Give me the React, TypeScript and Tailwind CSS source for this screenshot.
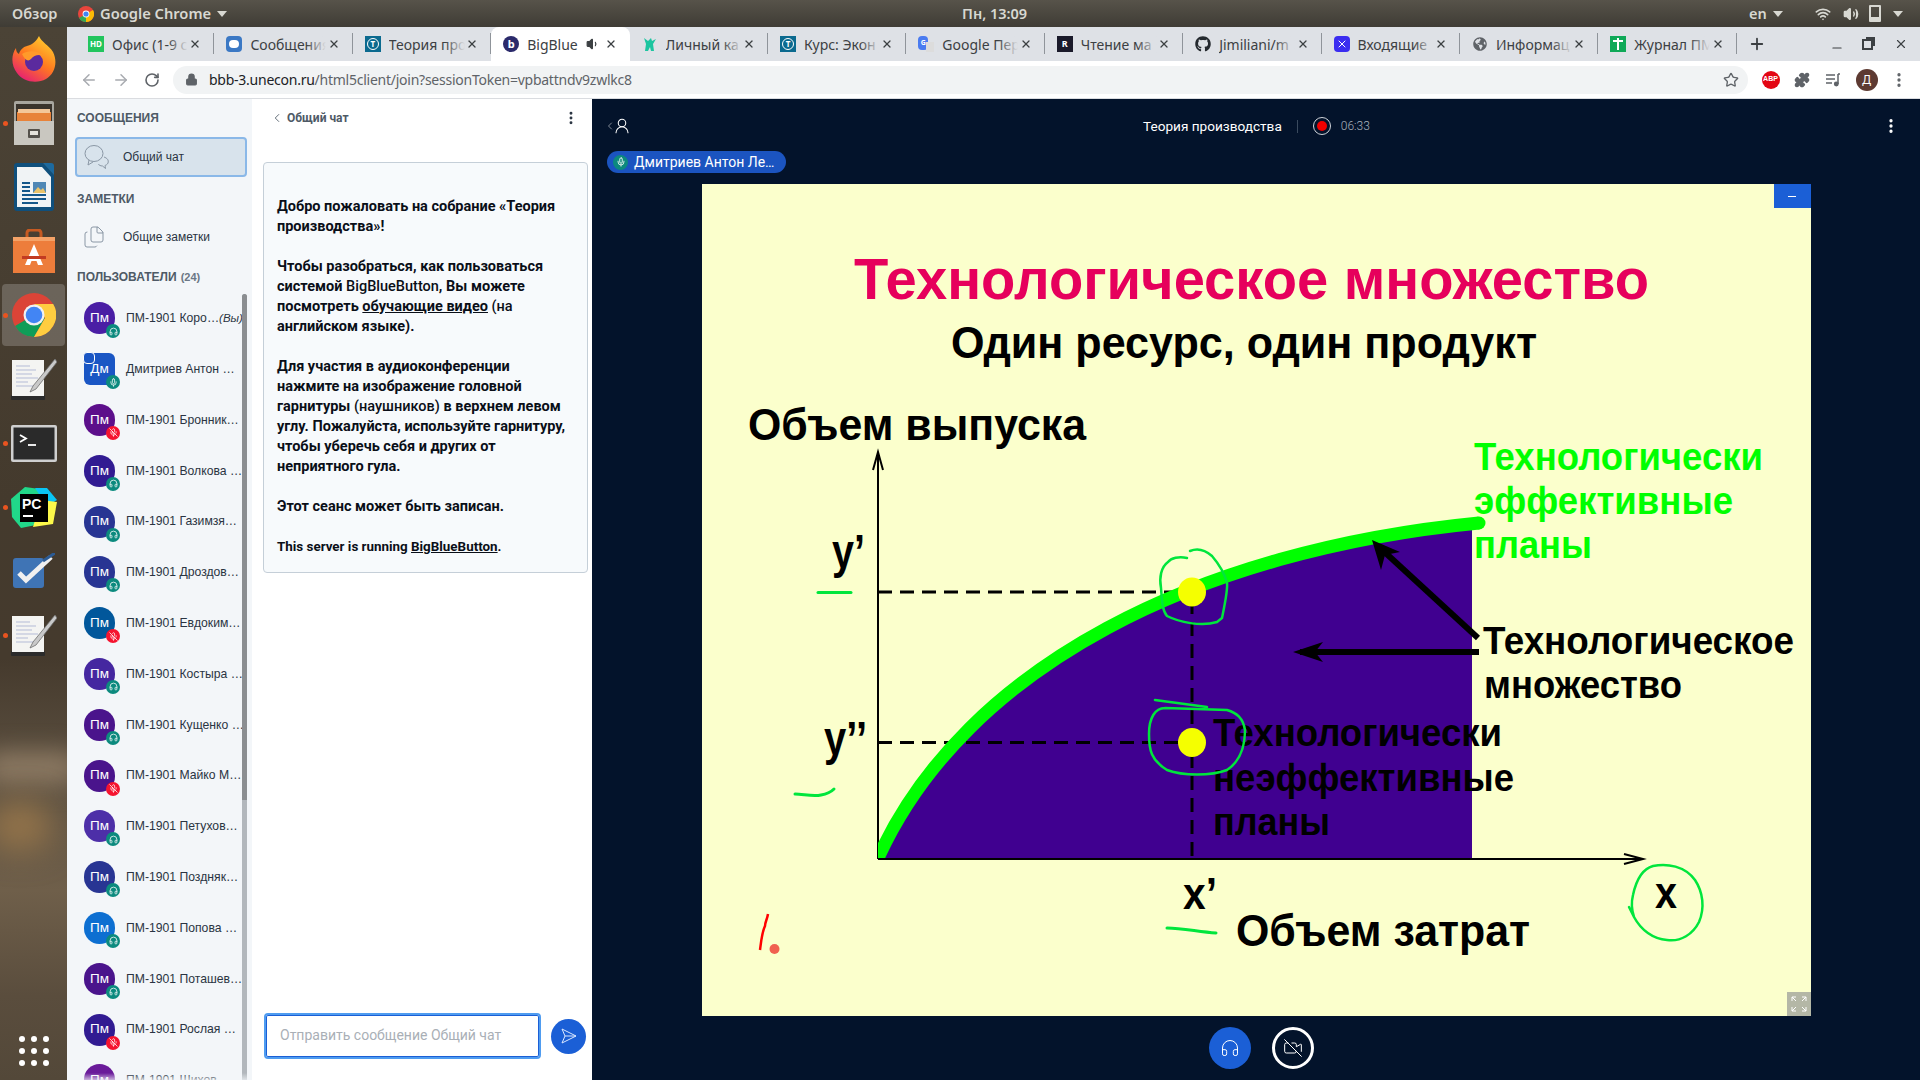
import {
  ArrowLeft,
  ArrowRight,
  ChevronLeft,
  EllipsisVertical,
  Files,
  Headphones,
  Lock,
  Mic,
  MicOff,
  Minus,
  Plus,
  Puzzle,
  RotateCw,
  Star,
  UserRound,
  VideoOff,
  Volume1,
  Volume2,
  Wifi,
  X,
} from "lucide-react";
import { FaGithub, FaGlobeAmericas } from "react-icons/fa";
import { ReactNode } from "react";

const users = [
  { name: "ПМ-1901 Коро…", color: "bg-[#4a1ea5]", you: true },
  { name: "Дмитриев Антон …", color: "bg-[#1a56c4]", presenter: true },
  { name: "ПМ-1901 Бронник…", color: "bg-[#5c0f8b]", muted: true },
  { name: "ПМ-1901 Волкова …", color: "bg-[#311b92]" },
  { name: "ПМ-1901 Газимзя…", color: "bg-[#283593]" },
  { name: "ПМ-1901 Дроздов…", color: "bg-[#283593]" },
  { name: "ПМ-1901 Евдоким…", color: "bg-[#01579b]", muted: true },
  { name: "ПМ-1901 Костыра …", color: "bg-[#4527a0]" },
  { name: "ПМ-1901 Кущенко …", color: "bg-[#4a148c]" },
  { name: "ПМ-1901 Майко М…", color: "bg-[#4a148c]", muted: true },
  { name: "ПМ-1901 Петухов…", color: "bg-[#4d2fa8]" },
  { name: "ПМ-1901 Поздняк…", color: "bg-[#283593]" },
  { name: "ПМ-1901 Попова …", color: "bg-[#0d6fd1]" },
  { name: "ПМ-1901 Поташев…", color: "bg-[#4a148c]" },
  { name: "ПМ-1901 Рослая …", color: "bg-[#311b92]", muted: true },
  { name: "ПМ-1901 Шихов…", color: "bg-[#6a1b9a]" },
];

function TIcon() {
  return (
    <span className="flex h-4 w-4 items-center justify-center bg-[#0b6a8f]">
      <span className="flex h-3 w-3 items-center justify-center rounded-full border border-white text-[8px] font-bold text-white">
        T
      </span>
    </span>
  );
}

const tabs: { title: string; icon: ReactNode; active?: boolean }[] = [
  {
    title: "Офис (1-9 с",
    icon: (
      <span className="flex h-4 w-4 items-center justify-center bg-[#22c55e] text-[8px] font-bold text-white">
        HD
      </span>
    ),
  },
  {
    title: "Сообщения",
    icon: (
      <span className="flex h-4 w-4 items-center justify-center rounded-sm bg-[#3b78c4]">
        <span className="h-2 w-2.5 rounded-sm bg-white" />
      </span>
    ),
  },
  { title: "Теория прои", icon: <TIcon /> },
  {
    title: "BigBlue",
    active: true,
    icon: (
      <span className="flex h-4 w-4 items-center justify-center rounded-full bg-[#2b2a6b] text-[11px] font-bold text-white">
        b
      </span>
    ),
  },
  {
    title: "Личный ка",
    icon: (
      <svg viewBox="0 0 16 16" className="h-4 w-4">
        <path d="M2 2l4 3 3-3 1 3 4-2-3 5 1 7H9L8 11l-2 4H3l1-7z" fill="#1cc5a0" />
      </svg>
    ),
  },
  { title: "Курс: Экон", icon: <TIcon /> },
  {
    title: "Google Пере",
    icon: (
      <span className="relative h-4 w-4">
        <span className="absolute left-0 top-0 flex h-3.5 w-2.5 items-center justify-center rounded-sm bg-[#4a7bf0] text-[7px] font-bold text-white">
          G
        </span>
        <span className="absolute bottom-0 right-0 h-2.5 w-2 bg-[#dcdcdc]" />
      </span>
    ),
  },
  {
    title: "Чтение ма",
    icon: (
      <span className="flex h-4 w-4 items-center justify-center bg-[#1a1a2a] text-[9px] font-bold text-white">
        R
      </span>
    ),
  },
  { title: "Jimiliani/m", icon: <FaGithub className="h-4 w-4 text-[#24292e]" /> },
  {
    title: "Входящие",
    icon: (
      <span className="flex h-4 w-4 items-center justify-center rounded-sm bg-[#3b2df0]">
        <X className="h-3 w-3 text-white" strokeWidth={2} />
      </span>
    ),
  },
  { title: "Информац", icon: <FaGlobeAmericas className="h-3.5 w-3.5 text-[#5f6368]" /> },
  {
    title: "Журнал ПМ",
    icon: (
      <span className="relative flex h-4 w-4 items-center justify-center bg-[#0fa958]">
        <span className="absolute h-3 w-0.5 bg-white" />
        <span className="absolute top-1 h-0.5 w-2.5 bg-white" />
      </span>
    ),
  },
];

function Tab({ title, icon, active }: { title: string; icon: ReactNode; active?: boolean }) {
  return (
    <div
      className={`relative flex h-[34px] w-[138.4px] shrink-0 items-center pl-3 ${
        active ? "rounded-t-lg bg-white" : ""
      }`}
    >
      <span className="flex h-4 w-4 shrink-0 items-center justify-center">{icon}</span>
      <span className="relative ml-2 w-[76px] overflow-hidden whitespace-nowrap text-[14px] text-[#3c4043]">
        {title}
        <span
          className={`absolute inset-y-0 right-0 w-5 bg-gradient-to-r from-transparent ${
            active ? "to-white" : "to-[#dee1e6]"
          }`}
        />
      </span>
      {active && <Volume1 className="absolute left-[95px] h-3.5 w-3.5 fill-[#3c4043] text-[#3c4043]" />}
      <X className="absolute right-[13px] h-3 w-3 text-[#3c4043]" strokeWidth={2.6} />
      {!active && <span className="absolute right-0 top-1.5 h-[21px] w-px bg-[#8f949a]" />}
    </div>
  );
}

function TopBar() {
  return (
    <div className="flex h-[27px] shrink-0 items-center bg-gradient-to-b from-[#57534a] to-[#3f3c35] font-['Noto_Sans',sans-serif] text-[14.5px] font-semibold text-[#d8d8d2]">
      <span className="ml-3 w-[66px]">Обзор</span>
      <svg viewBox="0 0 16 16" className="h-4 w-4">
        <circle cx="8" cy="8" r="8" fill="#e8453c" />
        <path d="M8 8L1 12a8 8 0 0 0 7 4z" fill="#34a853" />
        <path d="M8 8l7-4a8 8 0 0 1-7 12z" fill="#fbbc05" />
        <circle cx="8" cy="8" r="3.4" fill="#fff" />
        <circle cx="8" cy="8" r="2.6" fill="#4285f4" />
      </svg>
      <span className="ml-1.5 w-[117px] whitespace-nowrap text-[14.7px]">Google Chrome</span>
      <span className="h-0 w-0 border-x-[5px] border-t-[6px] border-x-transparent border-t-[#d8d8d2]" />
      <span className="ml-[735px] w-[64px] whitespace-nowrap text-center">Пн, 13:09</span>
      <span className="ml-[723px] w-[20px]">en</span>
      <span className="ml-1 h-0 w-0 border-x-[5px] border-t-[6px] border-x-transparent border-t-[#d8d8d2]" />
      <Wifi className="ml-[32px] h-4 w-4 text-[#d8d8d2]" strokeWidth={2.5} />
      <Volume2 className="ml-[12px] h-4 w-4 fill-[#d8d8d2] text-[#d8d8d2]" />
      <span className="relative ml-[10px] h-[17px] w-[12px] rounded-[1px] border-2 border-[#d8d8d2]">
        <span className="absolute inset-x-0 bottom-0 h-[3px] bg-[#d8d8d2]" />
      </span>
      <span className="ml-[12px] h-0 w-0 border-x-[5px] border-t-[6px] border-x-transparent border-t-[#d8d8d2]" />
    </div>
  );
}

function TabStrip() {
  return (
    <div className="flex h-[34px] shrink-0 items-center bg-[#dee1e6] pl-[9px] font-['Noto_Sans',sans-serif]">
      {tabs.map((t) => (
        <Tab key={t.title} {...t} />
      ))}
      <Plus className="ml-[11px] h-[18px] w-[18px] text-[#3c4043]" strokeWidth={2.4} />
      <Minus className="ml-[64px] mt-2 h-[14px] w-[14px] text-[#3c4043]" strokeWidth={2} />
      <span className="relative ml-[18px] h-[11px] w-[11px] border-2 border-[#3c4043]">
        <span className="absolute -right-[4px] -top-[4px] h-[9px] w-[9px] border-r-2 border-t-2 border-[#3c4043]" />
      </span>
      <X className="ml-[21px] h-[14px] w-[14px] text-[#3c4043]" strokeWidth={2} />
    </div>
  );
}

function Toolbar() {
  return (
    <div className="flex h-[38px] shrink-0 items-center border-b border-[#dadce0] bg-white">
      <ArrowLeft className="ml-[13px] h-[18px] w-[18px] text-[#a8abb0]" strokeWidth={2} />
      <ArrowRight className="ml-[14px] h-[18px] w-[18px] text-[#a8abb0]" strokeWidth={2} />
      <RotateCw className="ml-[14px] h-[16px] w-[16px] text-[#5f6368]" strokeWidth={2.4} />
      <div className="ml-[13px] flex h-7 w-[1574.5px] items-center rounded-full bg-[#f1f3f4] pl-[12px] pr-2">
        <Lock className="h-[13px] w-[13px] fill-[#5f6368] text-[#5f6368]" strokeWidth={2} />
        <span className="ml-[11px] -mt-px whitespace-nowrap font-['Noto_Sans',sans-serif] text-[14px] tracking-[-0.25px] text-[#5f6368]">
          <span className="text-[#202124]">bbb-3.unecon.ru</span>/html5client/join?sessionToken=vpbattndv9zwlkc8
        </span>
        <Star className="ml-auto mr-[1px] h-4 w-4 text-[#5f6368]" strokeWidth={2} />
      </div>
      <span className="ml-[14px] flex h-[18px] w-[18px] items-center justify-center rounded-full bg-[#e30613] font-['Liberation_Sans',sans-serif] text-[7px] font-bold text-white">
        ABP
      </span>
      <Puzzle className="ml-[14px] h-4 w-4 fill-[#5f6368] text-[#5f6368]" />
      <svg viewBox="0 0 16 16" className="ml-[15px] h-4 w-4 text-[#5f6368]" fill="none" stroke="currentColor" strokeWidth="1.5">
        <path d="M1 3h9M1 7h9M1 11h6M13 2v10" />
        <circle cx="11.3" cy="12" r="1.7" fill="currentColor" />
        <path d="M13 2h2" />
      </svg>
      <span className="ml-[15px] flex h-[22px] w-[22px] items-center justify-center rounded-full bg-[#5d3a32] font-['Noto_Sans',sans-serif] text-[12px] text-white">
        Д
      </span>
      <EllipsisVertical className="ml-[12px] h-[18px] w-[18px] text-[#5f6368]" strokeWidth={2.4} />
    </div>
  );
}

function Firefox() {
  return (
    <svg viewBox="0 0 44 46" className="h-[46px] w-[44px]">
      <defs>
        <linearGradient id="ff" x1="0.8" y1="0" x2="0.2" y2="1">
          <stop offset="0" stopColor="#ffd22e" />
          <stop offset="0.5" stopColor="#ff7a1f" />
          <stop offset="1" stopColor="#e3177b" />
        </linearGradient>
      </defs>
      <path d="M27 0c2 6 10 9 14 16 5 10 2 22-7 27-9 5-23 3-29-6C-1 29-1 19 4 12c0 3 1 5 3 6 1-4 4-7 8-8 4-1 8-3 12-10z" fill="url(#ff)" />
      <circle cx="22" cy="26" r="9" fill="#5b2a9e" />
      <path d="M10 18c6-4 16-4 22 2-5-2-10-1-13 3-3 3-6 1-9-5z" fill="#ff9a2a" />
    </svg>
  );
}

function FileCabinet() {
  return (
    <svg viewBox="0 0 42 44" className="h-[44px] w-[42px]">
      <rect x="1" y="0" width="40" height="44" rx="2" fill="#a8a69e" />
      <rect x="3" y="3" width="36" height="18" fill="#3a342c" />
      <rect x="4" y="11" width="34" height="10" fill="#e8833a" />
      <rect x="5" y="8" width="32" height="4" fill="#f3c79a" />
      <rect x="1" y="20" width="40" height="24" fill="#c9c7c0" />
      <rect x="15" y="28" width="12" height="9" rx="1" fill="#55524c" />
      <rect x="17" y="30" width="8" height="4" fill="#e5e3dc" />
    </svg>
  );
}

function Writer() {
  return (
    <svg viewBox="0 0 40 48" className="h-[48px] w-[40px]">
      <path d="M0 3a3 3 0 0 1 3-3h26l11 12v33a3 3 0 0 1-3 3H3a3 3 0 0 1-3-3z" fill="#0f4f7c" />
      <path d="M3 4h25l9 10v30H3z" fill="#f0f3f5" />
      <path d="M29 0h8a3 3 0 0 1 3 3v9z" fill="#1d6a9f" />
      <path d="M8 20h8M8 24h8M8 28h8M8 32h24M8 36h24M8 40h16" stroke="#14578a" strokeWidth="2" />
      <rect x="19" y="19" width="13" height="11" fill="#4f87b5" />
      <path d="M19 30l5-6 3 3 2-2 3 5z" fill="#e9c36a" />
    </svg>
  );
}

function Store() {
  return (
    <svg viewBox="0 0 42 44" className="h-[44px] w-[42px]">
      <path d="M14 8V4a3 3 0 0 1 3-3h8a3 3 0 0 1 3 3v4" fill="none" stroke="#c65a22" strokeWidth="3" />
      <path d="M0 8h42v36H0z" fill="#ed7d3b" />
      <path d="M0 8h42v4H0z" fill="#f4a267" />
      <path d="M21 15l-9 21h5l1.5-4h5l1.5 4h5z" fill="#fff" />
      <rect x="9" y="27" width="24" height="3" fill="#c23b22" />
    </svg>
  );
}

function Chrome() {
  return (
    <svg viewBox="0 0 44 44" className="h-[44px] w-[44px]">
      <circle cx="22" cy="22" r="22" fill="#db4437" />
      <path d="M22 22L3 33a22 22 0 0 0 19 11l11-19z" fill="#0f9d58" />
      <path d="M22 11h19.2A22 22 0 0 1 22 44l11-19z" fill="#ffcd40" />
      <circle cx="22" cy="22" r="10.5" fill="#f1f1f1" />
      <circle cx="22" cy="22" r="8.3" fill="#4285f4" />
    </svg>
  );
}

function TextEditor() {
  return (
    <svg viewBox="0 0 46 42" className="h-[42px] w-[46px]">
      <rect x="0" y="36" width="34" height="5" rx="1" fill="#2b2b2b" />
      <rect x="1" y="1" width="32" height="36" fill="#f4f4f2" />
      <path d="M5 7h14M5 11h20M5 15h16M5 19h22M5 23h12M5 27h18" stroke="#b4bbd6" strokeWidth="1" />
      <path d="M44 0L22 27l-3 6 6-3L46 3z" fill="#c9c9c9" stroke="#6e6e6e" strokeWidth="0.8" />
    </svg>
  );
}

function Terminal() {
  return (
    <svg viewBox="0 0 46 37" className="h-[37px] w-[46px]">
      <rect width="46" height="37" rx="2" fill="#cfcfcf" />
      <rect x="2.5" y="2.5" width="41" height="32" fill="#2a2a2a" />
      <path d="M9 10l6 3.5-6 3.5" fill="none" stroke="#fff" strokeWidth="1.8" />
      <path d="M17 20h8" stroke="#fff" strokeWidth="1.8" />
    </svg>
  );
}

function PyCharm() {
  return (
    <svg viewBox="0 0 46 43" className="h-[43px] w-[46px]">
      <path d="M0 13L14 1l22 3-6 34-20 4L1 31z" fill="#21d789" />
      <path d="M24 2h12l10 12-10 6z" fill="#09c5f5" />
      <path d="M30 14l16 2-4 22-20 3z" fill="#fcf84a" />
      <rect x="9" y="8" width="28" height="28" fill="#000" />
      <text x="11" y="23" fill="#fff" fontSize="14" fontWeight="700" fontFamily="Liberation Sans, sans-serif">
        PC
      </text>
      <rect x="12" y="29" width="10" height="2" fill="#fff" />
    </svg>
  );
}

function Tasks() {
  return (
    <svg viewBox="0 0 42 37" className="h-[37px] w-[42px]">
      <rect x="0" y="5" width="31" height="30" rx="3" fill="#3f74b5" />
      <path d="M6 20l7 7L38 4" fill="none" stroke="#f0f0f0" strokeWidth="5" />
      <path d="M30 8L42 0" stroke="#2c5b94" strokeWidth="3" />
    </svg>
  );
}

function Dock() {
  const apps = [
    { el: <Firefox /> },
    { el: <FileCabinet />, on: true },
    { el: <Writer /> },
    { el: <Store /> },
    { el: <Chrome />, on: true, focus: true },
    { el: <TextEditor /> },
    { el: <Terminal />, on: true },
    { el: <PyCharm />, on: true },
    { el: <Tasks /> },
    { el: <TextEditor />, on: true },
  ];
  return (
    <div className="relative flex w-[67px] shrink-0 flex-col overflow-hidden bg-[linear-gradient(180deg,#4b4336_0%,#443a2d_45%,#453a2d_60%,#5e5242_72%,#6f5f4a_82%,#5a4d3d_92%,#534839_100%)]">
      <span className="absolute -left-4 top-[725px] h-8 w-24 rounded-full bg-[#8d7a63] blur-md" />
      <span className="absolute -left-3 top-[775px] h-12 w-16 rounded-full bg-[#94744a] blur-lg" />
      {apps.map((a, i) => (
        <div key={i} className="relative flex h-[64.1px] items-center justify-center">
          {a.focus && <span className="absolute inset-x-[2px] inset-y-[1px] rounded bg-white/20" />}
          {a.on && <span className="absolute left-[3px] h-[5px] w-[5px] rounded-full bg-[#e95420]" />}
          <span className="relative flex">{a.el}</span>
        </div>
      ))}
      <div className="relative mt-auto mb-[14px] grid grid-cols-3 gap-x-[6px] gap-y-[6px] self-center">
        {Array.from({ length: 9 }).map((_, i) => (
          <span key={i} className="h-[6px] w-[6px] rounded-full bg-white" />
        ))}
      </div>
    </div>
  );
}

function SectionTitle({ children, className }: { children: ReactNode; className: string }) {
  return (
    <div className={`flex items-center pl-[10px] text-[12px] font-bold text-[#4e5a66] ${className}`}>{children}</div>
  );
}

function UserRow({ user }: { user: (typeof users)[number] }) {
  return (
    <div className="flex h-[50.8px] shrink-0 items-center pl-[17px]">
      <div
        className={`relative flex h-8 w-[31px] shrink-0 items-center justify-center text-[13.5px] text-white ${user.color} ${
          user.presenter ? "rounded-md" : "rounded-full"
        }`}
      >
        {user.name.startsWith("Дм") ? "Дм" : "Пм"}
        {user.presenter && <span className="absolute -left-px -top-px h-3 w-3 rounded-sm border border-white bg-[#1a56c4]" />}
        <span
          className={`absolute -bottom-1 -right-[5px] flex h-[14px] w-[14px] items-center justify-center rounded-full ${
            user.muted ? "bg-[#f5142f]" : "bg-[#0c8a7e]"
          }`}
        >
          {user.muted ? (
            <MicOff className="h-[9px] w-[9px] text-white" />
          ) : user.presenter ? (
            <Mic className="h-[9px] w-[9px] text-white" />
          ) : (
            <Headphones className="h-[9px] w-[9px] text-white" />
          )}
        </span>
      </div>
      <span className="ml-[11px] whitespace-nowrap text-[12.2px] text-[#2a3442]">
        {user.name}
        {user.you && <em className="text-[11.5px]">(Вы)</em>}
      </span>
    </div>
  );
}

function Sidebar() {
  return (
    <div className="relative flex w-[185px] shrink-0 flex-col overflow-hidden bg-[#f3f6f9] font-['Liberation_Sans',sans-serif]">
      <SectionTitle className="h-[36px] shrink-0 pt-[2px]">СООБЩЕНИЯ</SectionTitle>
      <div className="ml-[8px] mt-[2px] flex h-[40px] w-[172px] shrink-0 items-center rounded-sm border-2 border-[#8ab8e8] bg-[#d8e3ec] pl-[7px]">
        <svg viewBox="0 0 26 26" className="h-[26px] w-[26px] text-[#8a97a5]" fill="none" stroke="currentColor" strokeWidth="1">
          <ellipse cx="10" cy="9.5" rx="9" ry="8" />
          <path d="M5 16l-1 5 5-3" />
          <path d="M20 13c3 1 5 3 4 6-.5 1.5-2 2-3 2.5l.5 3-3-2.5c-2 0-4-1-4-2" />
        </svg>
        <span className="ml-[13px] text-[12px] text-[#2a3442]">Общий чат</span>
      </div>
      <SectionTitle className="h-[42px] shrink-0 pt-[2px]">ЗАМЕТКИ</SectionTitle>
      <div className="flex h-[35px] shrink-0 items-center pl-[15px]">
        <Files className="h-[26px] w-[24px] text-[#8a97a5]" strokeWidth={1} />
        <span className="ml-[17px] text-[12px] text-[#2a3442]">Общие заметки</span>
      </div>
      <SectionTitle className="h-[39px] shrink-0 pt-[7px]">
        ПОЛЬЗОВАТЕЛИ<span className="ml-1 text-[11px] text-[#6b7785]">(24)</span>
      </SectionTitle>
      <div className="flex flex-1 flex-col overflow-hidden">
        {users.map((u) => (
          <UserRow key={u.name} user={u} />
        ))}
      </div>
      <div className="absolute bottom-0 right-[5px] top-[195px] w-[5px] rounded-t bg-[#b2b7bc]">
        <div className="h-[506px] rounded-t bg-[#8b8e91]" />
      </div>
      <div className="absolute inset-x-0 bottom-0 h-[7px] bg-gradient-to-t from-[#f3f6f9]/70 to-transparent" />
    </div>
  );
}

function ChatPanel() {
  return (
    <div className="flex w-[340px] shrink-0 flex-col bg-white font-['Roboto',sans-serif]">
      <div className="flex h-[38px] shrink-0 items-center pl-[18px] pr-[13px] text-[12px] font-bold text-[#4e5a66]">
        <ChevronLeft className="h-[14px] w-[14px]" strokeWidth={1.5} />
        <span className="ml-[3px]">Общий чат</span>
        <EllipsisVertical className="ml-auto h-[16px] w-[16px] text-[#2a3442]" strokeWidth={2.4} />
      </div>
      <div className="ml-[11px] mt-[24.5px] h-[411px] w-[325px] shrink-0 rounded-sm border border-[#c5cfd8] bg-[#f7fafc] pl-[13px] pr-[14px] pt-[34px] text-[14.5px] font-bold leading-[20px] text-[#0a0f18]">
        <p>Добро пожаловать на собрание «Теория производства»!</p>
        <p className="mt-[20px]">
          Чтобы разобраться, как пользоваться системой <span className="font-medium">BigBlueButton</span>, Вы можете
          посмотреть <u>обучающие видео</u> <span className="font-medium">(на</span> английском языке).
        </p>
        <p className="mt-[20px]">
          Для участия в аудиоконференции нажмите на изображение головной гарнитуры{" "}
          <span className="font-medium">(наушников)</span> в верхнем левом углу. Пожалуйста, используйте гарнитуру,
          чтобы уберечь себя и других от неприятного гула.
        </p>
        <p className="mt-[20px]">Этот сеанс может быть записан.</p>
        <p className="mt-[20px] text-[13.4px]">
          This server is running <u>BigBlueButton</u>.
        </p>
      </div>
      <div className="mt-auto mb-[21px] ml-[12px] flex items-center">
        <div className="flex h-[46px] w-[277px] items-center rounded-sm border-2 border-[#4f9cf0] px-[14px] shadow-[inset_0_0_0_1px_#1b5fd6]">
          <span className="-mt-px whitespace-nowrap text-[14px] text-[#a9afb6]">Отправить сообщение Общий чат</span>
        </div>
        <span className="ml-[10px] flex h-[35px] w-[35px] items-center justify-center rounded-full bg-[#1b5fd6]">
          <svg viewBox="0 0 18 18" className="h-[18px] w-[18px]" fill="none" stroke="#dbe8ff" strokeWidth="1">
            <path d="M2 2l14 7-14 7 3-7zM5 9h11" />
          </svg>
        </span>
      </div>
    </div>
  );
}

function SlideText({
  x,
  y,
  w,
  size,
  fill = "#000",
  children,
}: {
  x: number;
  y: number;
  w: number;
  size: number;
  fill?: string;
  children: ReactNode;
}) {
  return (
    <text
      x={x}
      y={y}
      fontSize={size}
      fill={fill}
      textLength={w}
      lengthAdjust="spacingAndGlyphs"
      className="font-['Liberation_Sans',sans-serif] font-bold"
    >
      {children}
    </text>
  );
}

const curve = "M878 858C966 665 1200 550 1479 523";

function Slide() {
  return (
    <div className="relative mx-auto mt-[11px] h-[832px] w-[1109px] shrink-0 bg-[#fbffcc]">
      <svg viewBox="702 184 1109 832" className="block h-full w-full">
        <clipPath id="above-axis">
          <rect x="878" y="500" width="620" height="358" />
        </clipPath>
        <path d={`${curve}L1472 524V858Z`} fill="#400090" />
        <SlideText x={854} y={299} w={795} size={58} fill="#e6005c">
          Технологическое множество
        </SlideText>
        <SlideText x={951} y={358} w={586} size={44}>
          Один ресурс, один продукт
        </SlideText>
        <SlideText x={748} y={440} w={338} size={44}>
          Объем выпуска
        </SlideText>
        <SlideText x={1474} y={470} w={289} size={38} fill="#00ff00">
          Технологически
        </SlideText>
        <SlideText x={1474} y={514} w={259} size={38} fill="#00ff00">
          эффективные
        </SlideText>
        <SlideText x={1474} y={558} w={118} size={38} fill="#00ff00">
          планы
        </SlideText>
        <SlideText x={1483} y={654} w={311} size={38}>
          Технологическое
        </SlideText>
        <SlideText x={1484} y={698} w={198} size={38}>
          множество
        </SlideText>
        <SlideText x={1213} y={746} w={289} size={38}>
          Технологически
        </SlideText>
        <SlideText x={1213} y={791} w={301} size={38}>
          неэффективные
        </SlideText>
        <SlideText x={1213} y={835} w={117} size={38}>
          планы
        </SlideText>
        <SlideText x={832} y={568} w={33} size={48}>
          y’
        </SlideText>
        <SlideText x={824} y={755} w={43} size={48}>
          y’’
        </SlideText>
        <SlideText x={1183} y={909} w={34} size={44}>
          x’
        </SlideText>
        <SlideText x={1236} y={946} w={294} size={44}>
          Объем затрат
        </SlideText>
        <SlideText x={1655} y={908} w={22} size={44}>
          x
        </SlideText>

        <path d="M878 859V455M873 470l5-18 5 18" fill="none" stroke="#000" strokeWidth="2" />
        <path d="M878 859H1642M1624 854l19 5-19 5" fill="none" stroke="#000" strokeWidth="2" />
        <path d="M878 592H1180M878 742.5H1180M1192 600V858" fill="none" stroke="#000" strokeWidth="3" strokeDasharray="14 8" />
        <path d={curve} fill="none" stroke="#00ff00" strokeWidth="13" clipPath="url(#above-axis)" />
        <circle cx="1479" cy="523" r="6.5" fill="#00ff00" />
        <ellipse cx="1192" cy="592" rx="14" ry="14.5" fill="#f5ff00" />
        <ellipse cx="1192" cy="742.5" rx="14" ry="14.5" fill="#f5ff00" />

        <path d="M1478 638L1378 546" stroke="#000" strokeWidth="6" />
        <path d="M1372 540l28 12-15 3-4 15z" fill="#000" />
        <path d="M1479 652H1300" stroke="#000" strokeWidth="6" />
        <path d="M1293 652l30-10-8 10 8 10z" fill="#000" />

        <g fill="none" stroke="#00e63c" strokeWidth="2.5" strokeLinecap="round" strokeLinejoin="round">
          <path d="M1187 558c-8-2-16 0-19 4-7 5-9 16-7 26 1 12 1 22 6 28 12 6 34 11 50 6l5-4c2-10 6-28 5-35-3-12-9-20-15-27-8-7-15-8-22-5" />
          <path d="M1155 700l52 7" />
          <path d="M1165 708c-10 0-16 10-16 26 0 16 2 26 18 36 16 6 44 6 60 0 12-8 18-22 18-40-2-12-8-17-18-20l-62-2" />
          <path d="M818 592.5h33" strokeWidth="3" />
          <path d="M795 794c8 0 18 3 26 1 6-1 10-3 13-6" strokeWidth="3" />
          <path d="M1167 928c16 0 32 4 49 5" strokeWidth="3" />
          <path d="M1629 907l5 10c-2-6-3-14-1-22 3-14 9-26 20-29 14-3 32 0 42 14 8 12 10 28 4 42-6 12-18 20-32 18-14-1-26-10-33-23" />
        </g>
        <path d="M768 914c-1 6-3 8-3 12-3 6-4 16-5 24" fill="none" stroke="#f00" strokeWidth="2.5" />
        <circle cx="774.5" cy="949" r="5" fill="#f06050" />
      </svg>
      <span className="absolute right-0 top-0 flex h-6 w-[37px] items-center justify-center bg-[#1b5fd6]">
        <span className="h-px w-2 bg-white" />
      </span>
      <span className="absolute bottom-0 right-0 flex h-6 w-6 items-center justify-center bg-[#b4b7a6]">
        <svg viewBox="0 0 16 16" className="h-4 w-4" fill="none" stroke="#fff" strokeWidth="1">
          <path d="M1 5V1h4M1 1l4 4M15 5V1h-4M15 1l-4 4M1 11v4h4M1 15l4-4M15 11v4h-4M15 15l-4-4" />
        </svg>
      </span>
    </div>
  );
}

function Presentation() {
  return (
    <div className="flex min-w-0 flex-1 flex-col bg-[#03132b] font-['Roboto',sans-serif]">
      <div className="relative flex h-[52px] shrink-0 items-center pt-[2px] text-white">
        <ChevronLeft className="ml-[12px] h-3 w-3 text-white" strokeWidth={1} />
        <UserRound className="-ml-[3px] h-[18px] w-[18px] text-white" strokeWidth={1.4} />
        <span className="ml-[512px] whitespace-nowrap text-[13.6px]">Теория производства</span>
        <span className="ml-[15px] h-[13px] w-px bg-[#3a4a5e]" />
        <span className="ml-[15px] flex h-[18px] w-[18px] items-center justify-center rounded-full border border-[#d0d4da]">
          <span className="h-[10px] w-[10px] rounded-full bg-[#f00000]" />
        </span>
        <span className="ml-[10px] text-[12px] font-light text-[#aab2bd]">06:33</span>
        <EllipsisVertical className="ml-auto mr-[20px] h-[18px] w-[18px]" strokeWidth={2.4} />
      </div>
      <div className="ml-[15px] flex h-[22px] w-[179px] shrink-0 items-center rounded-full bg-[#1b54c0] text-[14px] text-white">
        <span className="ml-[6px] flex h-[15px] w-[15px] items-center justify-center rounded-full bg-[#0c8a7e]">
          <Mic className="h-[10px] w-[10px]" />
        </span>
        <span className="ml-[6px] whitespace-nowrap">Дмитриев Антон Ле…</span>
      </div>
      <Slide />
      <div className="flex flex-1 items-center justify-center gap-[21px] pl-[11px]">
        <span className="flex h-[42px] w-[42px] items-center justify-center rounded-full bg-[#1b5fd6] text-white">
          <Headphones className="h-[20px] w-[20px]" strokeWidth={1.2} />
        </span>
        <span className="flex h-[42px] w-[42px] items-center justify-center rounded-full border-[3px] border-white text-white">
          <VideoOff className="h-[20px] w-[20px]" strokeWidth={1.2} />
        </span>
      </div>
    </div>
  );
}

export default function App() {
  return (
    <div className="flex h-[1080px] w-[1920px] flex-col overflow-hidden">
      <TopBar />
      <div className="flex min-h-0 flex-1">
        <Dock />
        <div className="flex min-w-0 flex-1 flex-col">
          <TabStrip />
          <Toolbar />
          <div className="flex min-h-0 flex-1">
            <Sidebar />
            <ChatPanel />
            <Presentation />
          </div>
        </div>
      </div>
    </div>
  );
}
